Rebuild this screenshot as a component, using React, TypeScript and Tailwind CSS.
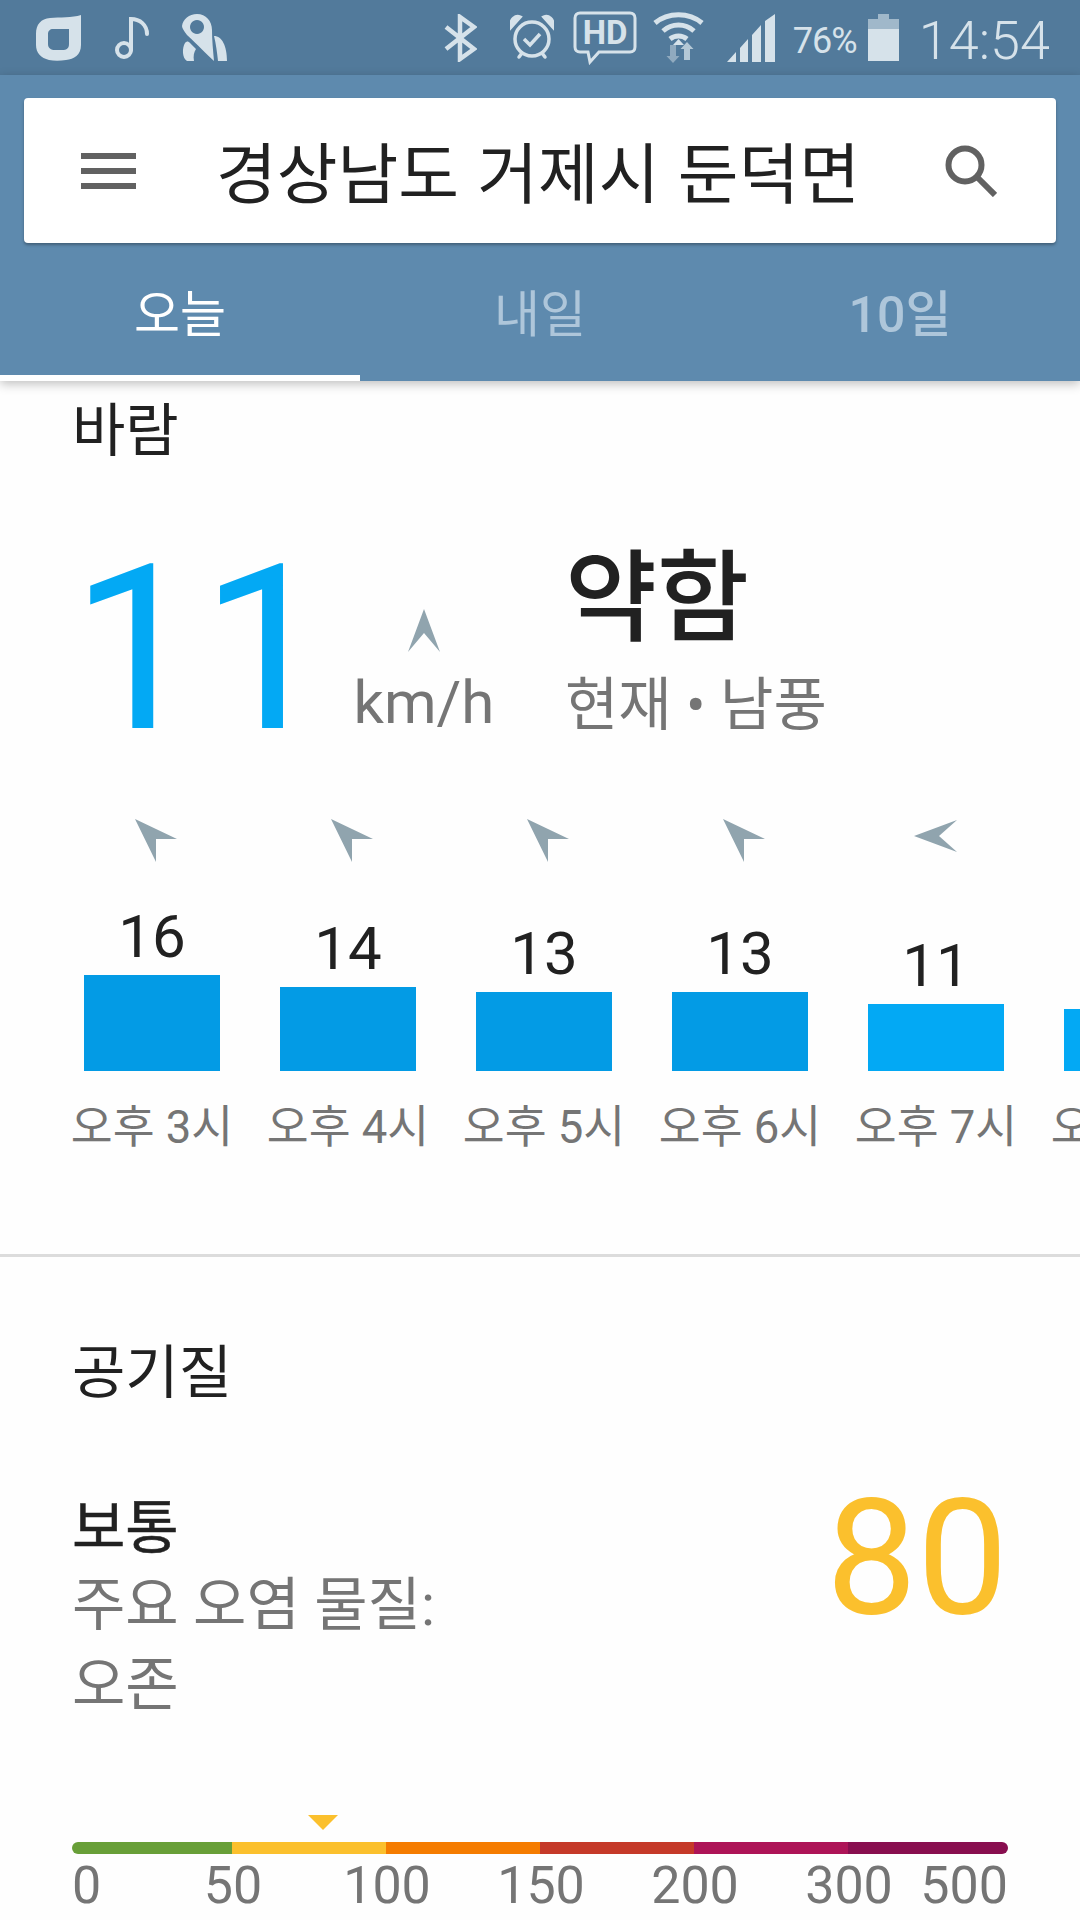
const upLeft = '9,0 51,20 30,20 30,43'
const left = '4,17 47,1 29,17 47,33'

const hours = [
	{ time: '오후 3시', speed: 16, height: 'h-[96px]', color: 'bg-[#039be5]', arrow: upLeft },
	{ time: '오후 4시', speed: 14, height: 'h-[84px]', color: 'bg-[#039be5]', arrow: upLeft },
	{ time: '오후 5시', speed: 13, height: 'h-[79px]', color: 'bg-[#039be5]', arrow: upLeft },
	{ time: '오후 6시', speed: 13, height: 'h-[79px]', color: 'bg-[#039be5]', arrow: upLeft },
	{ time: '오후 7시', speed: 11, height: 'h-[67px]', color: 'bg-[#03a9f4]', arrow: left },
	{ time: '오후 8시', speed: 10, height: 'h-[62px]', color: 'bg-[#03a9f4]', arrow: left },
]

const scale = [
	{ color: 'bg-[#689f38]', width: 'w-[160px]' },
	{ color: 'bg-[#fbc02d]', width: 'w-[154px]' },
	{ color: 'bg-[#f57c00]', width: 'w-[154px]' },
	{ color: 'bg-[#c53929]', width: 'w-[154px]' },
	{ color: 'bg-[#ad1457]', width: 'w-[154px]' },
	{ color: 'bg-[#880e4f]', width: 'w-[160px]' },
]

const StatusIcons = () => (
	<>
		<svg className="ml-[36px] w-[45px] h-[46px]" viewBox="0 0 45 46" fill="#d6e2ea">
			<path
				fillRule="evenodd"
				d="M45 0V30C45 40 38 44 30 45C24 46 18 46 13 45C5 43 0 38 0 30V19C0 9 5 4 14 3C24 2 36 3 45 0ZM17 14C14 14 12 16 12 19V29C12 33 15 35 19 35H26C31 35 33 33 33 29V14Z"
			/>
		</svg>
		<svg className="ml-[34px] w-[35px] h-[44px]" viewBox="0 0 35 44" fill="none" stroke="#d6e2ea" strokeWidth="4">
			<circle cx="9" cy="34" r="7" />
			<path d="M16 34V3C25 3 32 9 32 18" strokeLinecap="round" />
		</svg>
		<svg className="ml-[32px] w-[45px] h-[47px]" viewBox="0 0 45 47" fill="#d6e2ea">
			<path
				fillRule="evenodd"
				d="M15 0C24 0 30 7 30 16C30 26 31 36 32 47C25 41 16 31 5 21C2 17 0 14 0 12C1 5 7 0 15 0ZM15 6A7 7 0 1 0 15.01 6Z"
			/>
			<path d="M32 22C40 22 45 32 45 47H36C35 38 34 30 32 22Z" />
			<path d="M3 29C5 27 6 27 8 29L14 35C12 38 11 42 12 47H5C0 44 0 34 3 29Z" />
		</svg>
	</>
)

const SystemIcons = () => (
	<>
		<svg className="w-[33px] h-[48px]" viewBox="0 0 33 48" fill="none" stroke="#d6e2ea" strokeWidth="4.5">
			<path d="M2 13L30 35L16 45V3L30 13L2 35" />
		</svg>
		<svg className="ml-[33px] w-[44px] h-[47px]" viewBox="0 0 44 47" fill="none" stroke="#d6e2ea" strokeWidth="3.5">
			<circle cx="22" cy="25" r="17" />
			<path d="M14 25L20 31L30 20" />
			<path d="M9 43L12 39M35 43L32 39" strokeLinecap="round" />
			<path d="M1 13L10 3C6 1 0 5 1 13ZM43 13L34 3C38 1 44 5 43 13Z" fill="#d6e2ea" />
		</svg>
		<svg className="ml-[19px] w-[64px] h-[54px]" viewBox="0 0 64 54" fill="none">
			<path
				d="M7 2H57C60 2 62 4 62 7V36C62 39 60 41 57 41H26L17 51L15 41H7C4 41 2 39 2 36V7C2 4 4 2 7 2Z"
				stroke="#d6e2ea"
				strokeWidth="3"
			/>
			<text
				x="32"
				y="33"
				textAnchor="middle"
				fill="#d6e2ea"
				className="font-['Roboto',sans-serif] font-bold text-[33px]"
			>
				HD
			</text>
		</svg>
		<svg className="ml-[16px] w-[51px] h-[52px]" viewBox="0 0 51 52" fill="none">
			<path d="M2 11C15 0 36 0 49 11M10 19C19 11 32 11 41 19M17 27C22 23 29 23 34 27" stroke="#d6e2ea" strokeWidth="5" />
			<path d="M25.500 27L31 33H20Z" fill="#d6e2ea" />
			<path d="M17 33V44H13.500L20 51L26.500 44H23V33Z" fill="#90aabf" />
			<path d="M31 48V37H27.500L34 30L40.500 37H37V48Z" fill="#b4c8d6" />
		</svg>
		<svg className="ml-[23px] w-[48px] h-[48px]" viewBox="0 0 48 48" fill="#d6e2ea">
			<path d="M0 48L9 38V48ZM13 34L21 25V48H13ZM25 21L34 11V48H25ZM38 7L48 0V48H38Z" />
		</svg>
		<span className="ml-[18px] mt-[6px] w-[70px] text-[36px] leading-[40px] tracking-[-1px] font-['Roboto',sans-serif] text-[#d6e2ea]">
			76%
		</span>
		<div className="ml-[5px] w-[31px] h-[47px] flex flex-col items-center">
			<div className="w-[11px] h-[5px] bg-[#a0b8ca]" />
			<div className="w-full h-[10px] bg-[#a0b8ca]" />
			<div className="w-full h-[32px] bg-[#d6e2ea]" />
		</div>
		<span className="ml-[20px] mr-[30px] mt-[6px] text-[54px] leading-[56px] font-light font-['Roboto',sans-serif] text-[#d6e2ea]">
			14:54
		</span>
	</>
)

const App = () => {
	return (
		<div className="relative w-[1080px] h-[1920px] overflow-hidden bg-[#fefefe] font-['Roboto','Noto_Sans_CJK_KR',sans-serif]">
			{/* Status bar */}
			<div className="h-[75px] bg-[#527a9b] flex items-center justify-between">
				<div className="flex items-center">
					<StatusIcons />
				</div>
				<div className="flex items-center">
					<SystemIcons />
				</div>
			</div>

			{/* Search card and tabs */}
			<div className="relative z-10 h-[306px] bg-[#5e8aae] shadow-[0_3px_10px_rgba(0,0,0,0.25)]">
				<div className="pt-[23px] px-[24px]">
					<div className="h-[145px] bg-white rounded-[4px] shadow-[0_2px_3px_rgba(0,0,0,0.3)] flex items-center">
						<svg className="ml-[57px] w-[55px] h-[36px]" viewBox="0 0 55 36" fill="#616161">
							<path d="M0 0H55V6H0ZM0 15H55V21H0ZM0 30H55V36H0Z" />
						</svg>
						<div className="ml-[80px] mt-[10px] w-[643px] text-[66px] leading-[80px] text-[#212121] whitespace-nowrap [word-spacing:2px]">
							경상남도 거제시 둔덕면
						</div>
						<svg className="ml-[86px] w-[52px] h-[52px]" viewBox="0 0 52 52" fill="none" stroke="#616161">
							<circle cx="20" cy="20" r="16.500" strokeWidth="6" />
							<path d="M32 32L50 50" strokeWidth="6" />
						</svg>
					</div>
				</div>
				<div className="mt-[41px] flex">
					<div className="w-[360px] h-[97px] border-b-[6px] border-white text-center text-[50px] leading-[62px] text-white">
						오늘
					</div>
					<div className="w-[360px] text-center text-[50px] leading-[62px] text-[#aec6da]">내일</div>
					<div className="w-[360px] text-center text-[50px] leading-[62px] font-medium text-[#aec6da]">10일</div>
				</div>
			</div>

			{/* Wind */}
			<div className="h-[876px] border-b-[3px] border-[#dcdcdc] overflow-hidden">
				<div className="pl-[72px] pt-[18px] text-[58px] leading-[64px] text-[#212121]">바람</div>

				<div className="mt-[64px] pl-[73px] flex">
					<div className="w-[275px] text-[231px] leading-[200px] text-[#03a9f4] -ml-[2px] mt-[22px]">11</div>
					<div className="w-[156px] flex flex-col items-center">
						<svg className="mt-[82px] w-[32px] h-[43px]" viewBox="0 0 32 43" fill="#90a4ae">
							<polygon points="16,0 32,43 16,24 0,43" />
						</svg>
						<div className="mt-[15px] text-[60px] leading-[72px] text-[#757575]">km/h</div>
					</div>
					<div className="ml-[63px] mt-[17px] flex flex-col">
						<div className="text-[100px] leading-[110px] text-[#212121] font-medium">약함</div>
						<div className="mt-[15px] text-[58px] leading-[72px] text-[#757575]">현재 • 남풍</div>
					</div>
				</div>

				<div className="mt-[70px] pl-[54px] flex w-[1300px]">
					{hours.map((hour) => (
						<div key={hour.time} className="w-[196px] shrink-0 flex flex-col items-center">
							<svg className="w-[52px] h-[44px]" viewBox="0 0 52 44" fill="#90a4ae">
								<polygon points={hour.arrow} />
							</svg>
							<div className="h-[208px] flex flex-col justify-end items-center">
								<div className="text-[60px] leading-[64px] text-[#212121]">{hour.speed}</div>
								<div className={`mt-[6px] w-[136px] ${hour.height} ${hour.color}`} />
							</div>
							<div className="mt-[27px] text-[45.5px] leading-[60px] text-[#757575] whitespace-nowrap">{hour.time}</div>
						</div>
					))}
				</div>
			</div>

			{/* Air quality */}
			<div className="px-[72px]">
				<div className="mt-[80px] text-[58px] leading-[72px] text-[#212121]">공기질</div>
				<div className="mt-[82px] flex justify-between">
					<div>
						<div className="text-[58px] leading-[74px] text-[#212121] [-webkit-text-stroke:0.5px_#212121]">보통</div>
						<div className="text-[58px] leading-[80px] text-[#757575]">주요 오염 물질:</div>
						<div className="text-[58px] leading-[80px] text-[#757575]">오존</div>
					</div>
					<div className="-mt-[8px] text-[162px] leading-[150px] text-[#fbc02d]">80</div>
				</div>

				<div className="mt-[90px] ml-[236px] w-0 h-0 border-x-[15px] border-x-transparent border-t-[15px] border-t-[#fbc02d]" />
				<div className="mt-[12px] flex w-[936px] h-[12px] rounded-full overflow-hidden">
					{scale.map((part) => (
						<div key={part.color} className={`${part.width} ${part.color}`} />
					))}
				</div>
				<div className="pt-[2px] flex w-[936px] text-[52px] leading-[60px] text-[#757575]">
					<div className="w-[84px]">0</div>
					<div className="w-[154px] text-center">50</div>
					<div className="w-[154px] text-center">100</div>
					<div className="w-[154px] text-center">150</div>
					<div className="w-[154px] text-center">200</div>
					<div className="w-[154px] text-center">300</div>
					<div className="-ml-[8px] w-[90px] text-right whitespace-nowrap">500</div>
				</div>
			</div>
		</div>
	)
}
export default App
